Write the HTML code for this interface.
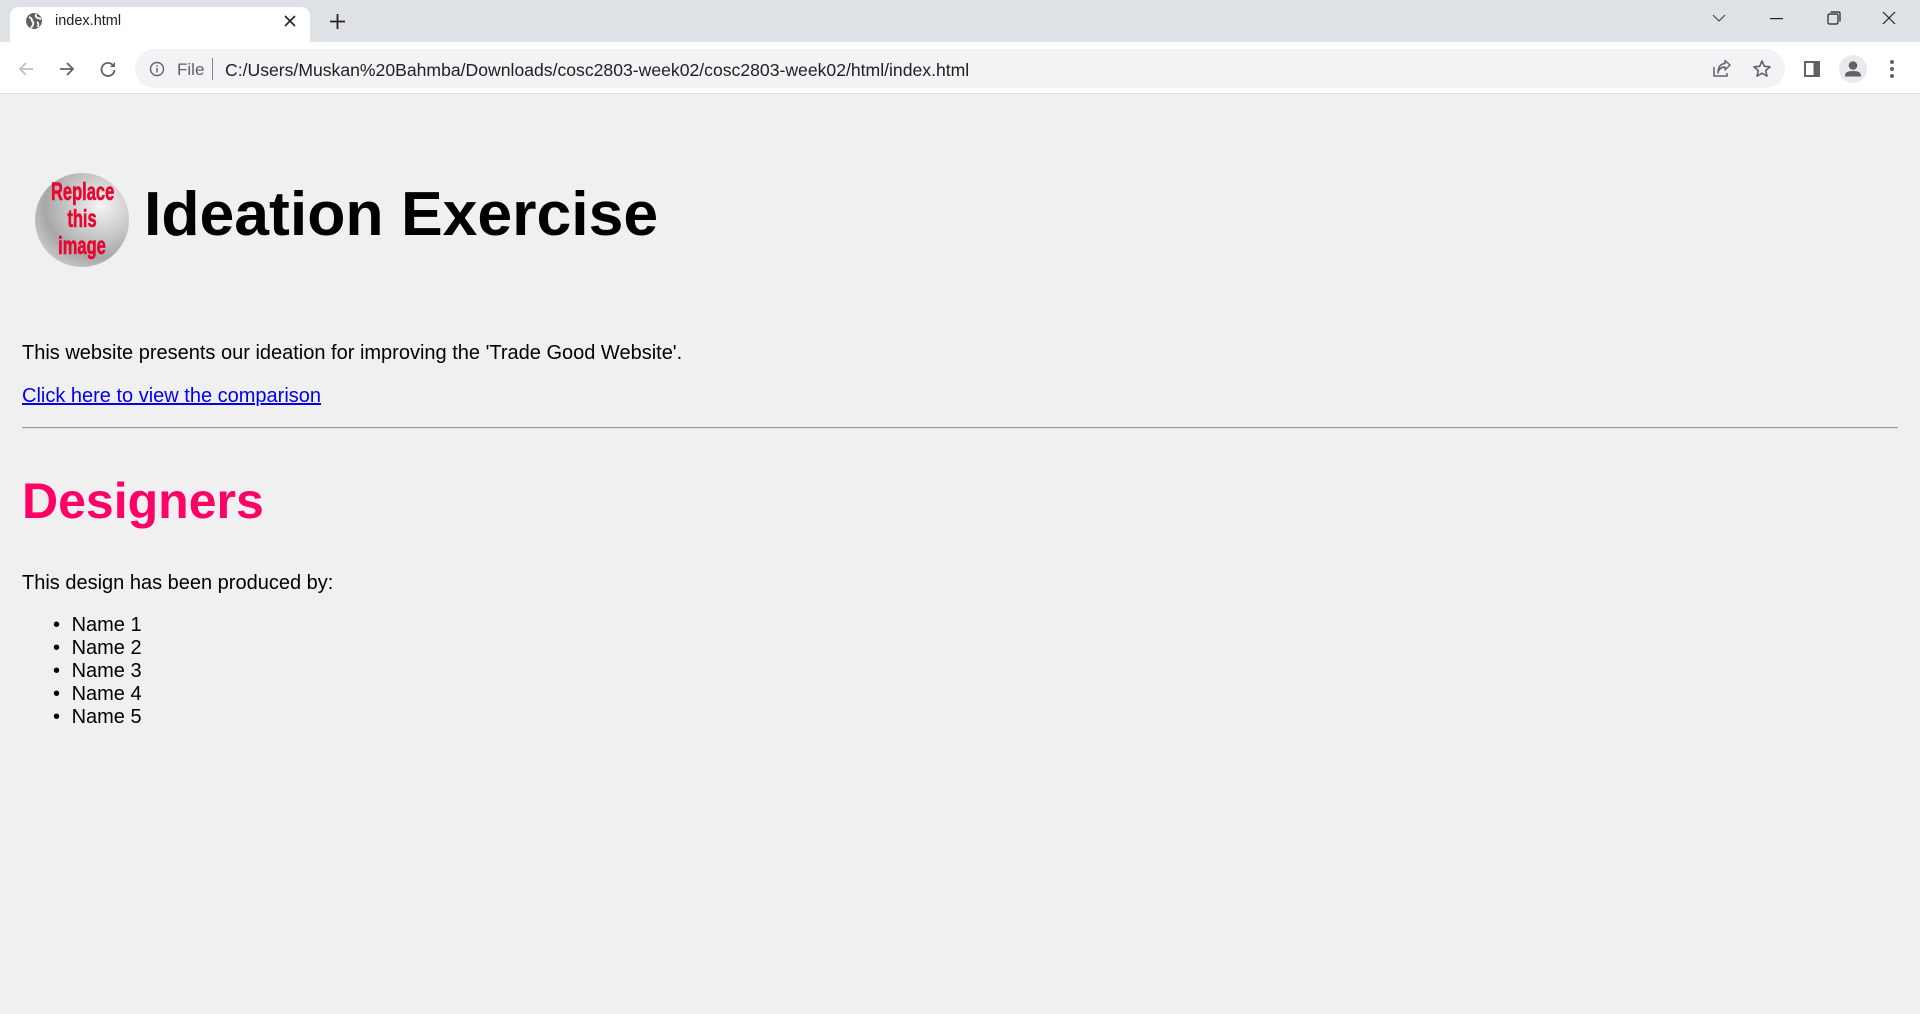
<!DOCTYPE html>
<html><head><meta charset="utf-8"><style>
*{margin:0;padding:0;box-sizing:border-box}
html,body{width:1920px;height:1014px;overflow:hidden;background:#f0f0f0;font-family:"Liberation Sans",Arial,sans-serif}
.a{position:absolute;white-space:nowrap}
#tabbar{position:absolute;left:0;top:0;width:1920px;height:42px;background:#dee1e6}
#tab{position:absolute;left:10px;top:7px;width:300px;height:35px;background:#fff;border-radius:9px 9px 0 0}
#toolbar{position:absolute;left:0;top:42px;width:1920px;height:52px;background:#fff;border-bottom:1px solid #dadce0}
#omni{position:absolute;left:135px;top:49px;width:1650px;height:39px;background:#f1f3f4;border-radius:20px}
.t20{font-size:20px;line-height:20px;color:#000}
</style></head><body>
<div id="tabbar"></div>
<div id="tab"></div>
<svg class="a" style="left:25px;top:12px" width="18" height="18" viewBox="0 0 18 18"><circle cx="9" cy="9" r="8" fill="#5f6368"/><path d="M4 5 Q7 6 7 9 Q9 10 8 13 L6 16 M11 2 Q10 5 13 6 L16 7 M12 10 Q14 11 13 15" stroke="#fff" stroke-width="1.8" fill="none"/></svg>
<div class="a" style="left:55px;top:13px;font-size:14.5px;color:#202124">index.html</div>
<svg class="a" style="left:284px;top:15px" width="12" height="12" viewBox="0 0 12 12"><path d="M1 1L11 11M11 1L1 11" stroke="#202124" stroke-width="1.6"/></svg>
<svg class="a" style="left:330px;top:14px" width="15" height="15" viewBox="0 0 15 15"><path d="M7.5 0V15M0 7.5H15" stroke="#202124" stroke-width="1.8"/></svg>
<svg class="a" style="left:1712px;top:14px" width="14" height="8" viewBox="0 0 14 8"><path d="M1 1L7 7L13 1" stroke="#3c4043" stroke-width="1.1" fill="none"/></svg>
<svg class="a" style="left:1770px;top:18px" width="13" height="2"><rect width="13" height="1.2" fill="#202124"/></svg>
<svg class="a" style="left:1827px;top:11px" width="14" height="14" viewBox="0 0 14 14"><rect x="1" y="3" width="10" height="10" rx="1.5" stroke="#202124" fill="none" stroke-width="1.2"/><path d="M3.5 1H11.5Q13 1 13 2.5V10.5" stroke="#202124" fill="none" stroke-width="1.2"/></svg>
<svg class="a" style="left:1882px;top:11px" width="14" height="14" viewBox="0 0 14 14"><path d="M1 1L13 13M13 1L1 13" stroke="#202124" stroke-width="1.2"/></svg>
<div id="toolbar"></div>
<div id="omni"></div>
<svg class="a" style="left:17px;top:60px" width="18" height="18" viewBox="0 0 18 18"><path d="M16 9H3M9 3L3 9L9 15" stroke="#bdc1c6" stroke-width="1.8" fill="none"/></svg>
<svg class="a" style="left:58px;top:60px" width="18" height="18" viewBox="0 0 18 18"><path d="M2 9H15M9 3L15 9L9 15" stroke="#5f6368" stroke-width="1.8" fill="none"/></svg>
<svg class="a" style="left:99px;top:60px" width="18" height="18" viewBox="0 0 18 18"><path d="M14.5 6A6.5 6.5 0 1 0 15.5 10" stroke="#5f6368" stroke-width="1.8" fill="none"/><path d="M16 2V7H11Z" fill="#5f6368"/></svg>
<svg class="a" style="left:149px;top:61px" width="16" height="16" viewBox="0 0 16 16"><circle cx="8" cy="8" r="6.5" stroke="#5f6368" stroke-width="1.4" fill="none"/><rect x="7.3" y="7" width="1.4" height="4.5" fill="#5f6368"/><rect x="7.3" y="4.3" width="1.4" height="1.5" fill="#5f6368"/></svg>
<div class="a" style="left:177px;top:60px;font-size:17px;color:#5f6368">File</div>
<div class="a" style="left:212px;top:58px;width:1px;height:22px;background:#80868b"></div>
<div class="a" style="left:225px;top:60px;font-size:17.6px;color:#202124;letter-spacing:0px">C:/Users/Muskan%20Bahmba/Downloads/cosc2803-week02/cosc2803-week02/html/index.html</div>
<svg class="a" style="left:1712px;top:59px" width="20" height="20" viewBox="0 0 20 20"><path d="M2 8V17H15V14" stroke="#5f6368" stroke-width="1.5" fill="none"/><path d="M6 14Q7 8 13 8V11L18 6L13 1.5V4.5Q6 5 6 14Z" stroke="#5f6368" stroke-width="1.4" fill="none" stroke-linejoin="round"/></svg>
<svg class="a" style="left:1752px;top:59px" width="20" height="20" viewBox="0 0 20 20"><path d="M10 2L12.3 7.3L18 7.8L13.7 11.6L15 17.2L10 14.2L5 17.2L6.3 11.6L2 7.8L7.7 7.3Z" stroke="#5f6368" stroke-width="1.6" fill="none" stroke-linejoin="round"/></svg>
<svg class="a" style="left:1803px;top:60px" width="18" height="18" viewBox="0 0 18 18"><rect x="1" y="1" width="16" height="16" fill="#5f6368"/><rect x="3" y="3" width="7.5" height="12" fill="#fff"/></svg>
<svg class="a" style="left:1839px;top:55px" width="28" height="28" viewBox="0 0 28 28"><circle cx="14" cy="14" r="14" fill="#e8eaed"/><circle cx="14" cy="10.5" r="4.3" fill="#5f6368"/><path d="M6 20.5Q6 16 14 16Q22 16 22 20.5V21.5H6Z" fill="#5f6368"/></svg>
<svg class="a" style="left:1889px;top:59px" width="6" height="20" viewBox="0 0 6 20"><circle cx="3" cy="3" r="2" fill="#5f6368"/><circle cx="3" cy="10" r="2" fill="#5f6368"/><circle cx="3" cy="17" r="2" fill="#5f6368"/></svg>

<div class="a" style="left:35px;top:173px;width:94px;height:94px;border-radius:50%;background:radial-gradient(ellipse at 70% 35%,#f4f4f4 0%,#c8c8c8 35%,#a8a8a8 60%,#d0d0d0 85%,#9a9a9a 100%)"></div>
<div class="a" style="left:35px;top:179px;width:94px;text-align:center;font-weight:bold;font-size:25px;line-height:27px;color:#e8062f;transform:scaleX(0.66);-webkit-text-stroke:0.6px #e8062f">Replace<br>this<br>image</div>

<div class="a" style="left:144px;top:183px;font-size:62.5px;line-height:62px;font-weight:bold;color:#000">Ideation Exercise</div>
<div class="a t20" style="left:22px;top:343px">This website presents our ideation for improving the 'Trade Good Website'.</div>
<div class="a t20" style="left:22px;top:386px;color:#0000ee;text-decoration:underline">Click here to view the comparison</div>
<div class="a" style="left:22px;top:427px;width:1876px;height:2px;border-top:1px solid #9a9a9a;border-bottom:1px solid #e4e4e4"></div>
<div class="a" style="left:22px;top:476px;font-size:50px;line-height:50px;font-weight:bold;color:#ff0066">Designers</div>
<div class="a t20" style="left:22px;top:573px">This design has been produced by:</div>
<div class="a t20" style="left:53px;top:614px;line-height:23px">
• <span style="padding-left:6px">Name 1</span><br>• <span style="padding-left:6px">Name 2</span><br>• <span style="padding-left:6px">Name 3</span><br>• <span style="padding-left:6px">Name 4</span><br>• <span style="padding-left:6px">Name 5</span>
</div>
</body></html>
